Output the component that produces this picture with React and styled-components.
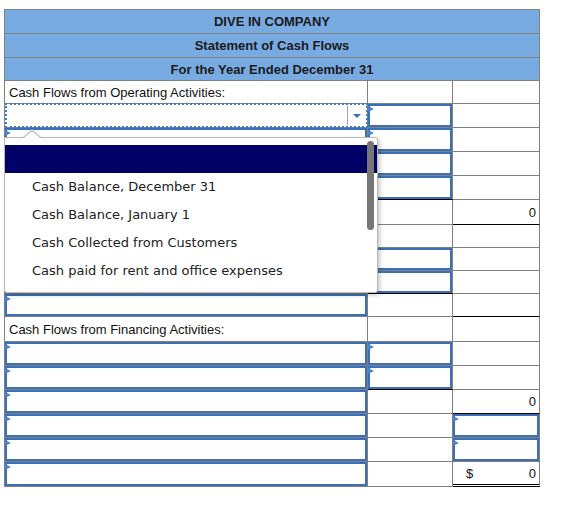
import React from 'react';
import styled, { createGlobalStyle, css } from 'styled-components';

const GlobalStyle = createGlobalStyle`
  body {
    margin: 0;
    background: #fff;
    font-family: "Liberation Sans", Arial, sans-serif;
    color: #000;
  }
`;

const Page = styled.div`
  position: relative;
  padding: 9px 0 0 4px;
`;

const Sheet = styled.div`
  width: 536px;
  box-sizing: border-box;
  border-left: 1px solid #808080;
  border-top: 1px solid #808080;
`;

const HeadRow = styled.div`
  height: ${p => p.$h}px;
  box-sizing: border-box;
  background: #78abe2;
  border-right: 1px solid #808080;
  border-bottom: 1px solid #808080;
  display: flex;
  align-items: center;
  justify-content: center;
  font-weight: bold;
  font-size: 13px;
  color: #1a1a1a;
`;

const Row = styled.div`
  display: grid;
  grid-template-columns: 363px 85px 87px;
  height: ${p => p.$h}px;
`;

const rules = {
  single: css`border-bottom: 1px solid #000;`,
  double: css`border-bottom: 3px double #000;`,
};

const Cell = styled.div`
  box-sizing: border-box;
  display: flex;
  align-items: center;
  min-width: 0;
  border-right: 1px solid #808080;
  border-bottom: 1px solid #808080;
  ${p => p.$rule && rules[p.$rule]}
`;

const Label = styled.span`
  padding-left: 4px;
  font-size: 13px;
  color: #111;
`;

const Amount = styled.div`
  flex: 1;
  display: flex;
  justify-content: space-between;
  padding: 0 3px 0 13px;
  font-size: 13px;
  color: #111;
`;

const Input = styled.div`
  position: relative;
  flex: 1;
  align-self: stretch;
  box-sizing: border-box;
  border: 2px solid #3c70b6;

  &::before {
    content: "";
    position: absolute;
    left: -2px;
    top: 0;
    border-left: 6px solid #4a84cc;
    border-top: 3px solid transparent;
    border-bottom: 3px solid transparent;
  }
`;

const Select = styled.div`
  flex: 1;
  align-self: stretch;
  display: flex;
  justify-content: flex-end;
  margin: -1px -1px -1px 0;
  border: 2px dotted #3d7cc9;
`;

const Caret = styled.div`
  width: 18px;
  margin: 1px 0;
  border-left: 1px solid #8fa9cc;
  display: flex;
  align-items: center;
  justify-content: center;

  &::after {
    content: "";
    border-top: 4px solid #3d6fb0;
    border-left: 4px solid transparent;
    border-right: 4px solid transparent;
  }
`;

const Popup = styled.div`
  position: absolute;
  left: 4px;
  top: 137px;
  width: 374px;
  height: 156px;
  box-sizing: border-box;
  padding-top: 7px;
  background: #fff;
  border: 1px solid #b8b8b8;
  border-radius: 0 3px 3px 3px;
  box-shadow: 2px 2px 4px rgba(0, 0, 0, 0.22);
  font-family: "DejaVu Sans", Verdana, sans-serif;
  font-size: 13px;
  color: #222;

  &::before,
  &::after {
    content: "";
    position: absolute;
    left: 18px;
    border-left: 9px solid transparent;
    border-right: 9px solid transparent;
  }
  &::before {
    top: -9px;
    border-bottom: 8px solid #c4c4c4;
  }
  &::after {
    top: -7px;
    border-bottom: 8px solid #fff;
  }
`;

const Option = styled.div`
  height: 28px;
  line-height: 28px;
  padding-left: 27px;
  white-space: nowrap;
  background: ${p => (p.$active ? '#000066' : 'transparent')};
`;

const Thumb = styled.div`
  position: absolute;
  right: 3px;
  top: 3px;
  width: 7px;
  height: 89px;
  border-radius: 4px;
  background: #777;
`;

const options = [
  '',
  'Cash Balance, December 31',
  'Cash Balance, January 1',
  'Cash Collected from Customers',
  'Cash paid for rent and office expenses',
];

const header = [
  { h: 24, text: 'DIVE IN COMPANY' },
  { h: 24, text: 'Statement of Cash Flows' },
  { h: 23, text: 'For the Year Ended December 31' },
];

const I = { input: true };

const rows = [
  { h: 23, c: [{ label: 'Cash Flows from Operating Activities:' }, {}, {}] },
  { h: 24, c: [{ select: true }, I, {}] },
  { h: 24, c: [I, I, {}] },
  { h: 24, c: [I, I, {}] },
  { h: 24, c: [I, { input: true, rule: 'single' }, {}] },
  { h: 25, c: [I, {}, { value: '0', rule: 'single' }] },
  { h: 23, c: [I, {}, {}] },
  { h: 23, c: [I, I, {}] },
  { h: 23, c: [I, { input: true, rule: 'single' }, {}] },
  { h: 23, c: [I, {}, { rule: 'single' }] },
  { h: 25, c: [{ label: 'Cash Flows from Financing Activities:' }, {}, {}] },
  { h: 24, c: [I, I, {}] },
  { h: 24, c: [I, { input: true, rule: 'single' }, {}] },
  { h: 24, c: [I, {}, { value: '0', rule: 'single' }] },
  { h: 24, c: [I, {}, I] },
  { h: 24, c: [I, {}, I] },
  { h: 25, c: [I, {}, { value: '0', dollar: true, rule: 'double' }] },
];

function CellBody({ cell }) {
  if (cell.label) return <Label>{cell.label}</Label>;
  if (cell.select) return <Select><Caret /></Select>;
  if (cell.input) return <Input />;
  if (cell.value)
    return (
      <Amount>
        <span>{cell.dollar ? '$' : ''}</span>
        <span>{cell.value}</span>
      </Amount>
    );
  return null;
}

export default function App() {
  return (
    <Page>
      <GlobalStyle />
      <Sheet>
        {header.map(r => (
          <HeadRow key={r.text} $h={r.h}>{r.text}</HeadRow>
        ))}
        {rows.map((r, i) => (
          <Row key={i} $h={r.h}>
            {r.c.map((cell, j) => (
              <Cell key={j} $rule={cell.rule}>
                <CellBody cell={cell} />
              </Cell>
            ))}
          </Row>
        ))}
      </Sheet>

      <Popup>
        {options.map((o, i) => (
          <Option key={i} $active={i === 0}>{o}</Option>
        ))}
        <Thumb />
      </Popup>
    </Page>
  );
}
